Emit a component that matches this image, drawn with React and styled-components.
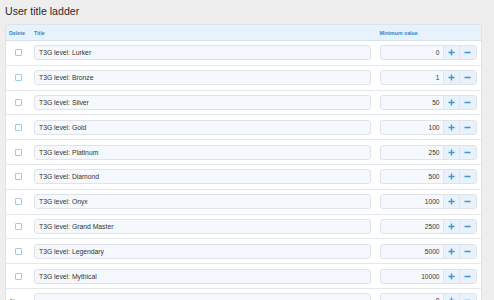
import React from "react";
import styled, { createGlobalStyle } from "styled-components";

const GlobalStyle = createGlobalStyle`
  html, body {
    margin: 0;
    padding: 0;
    background: #eeeeee;
    font-family: "Liberation Sans", Arial, sans-serif;
    overflow: hidden;
  }
`;

const Page = styled.div`
  padding: 5px 12px 0 5px;
  height: 300px;
  box-sizing: border-box;
`;

const Heading = styled.h1`
  margin: 0 0 7px 0;
  font-size: 10.6px;
  font-weight: normal;
  color: #2a2a2a;
  line-height: 12px;
`;

const Panel = styled.div`
  background: #fff;
  border: 1px solid #dfe3e8;
  border-radius: 2px 2px 0 0;
`;

// 공통 행 레이아웃
const Row = styled.div`
  display: grid;
  grid-template-columns: 24px 1fr 105.5px;
  align-items: center;
  height: ${p => (p.$header ? "16px" : "24.8px")};
  box-sizing: border-box;
  background: ${p => (p.$header ? "#e8f2fc" : "#fff")};
  border-bottom: 1px solid ${p => (p.$header ? "#d6e2ee" : "#e6e9ec")};
`;

const HeadCell = styled.div`
  font-size: 5.3px;
  font-weight: bold;
  color: #3a86c4;
  padding-left: ${p => p.$left || "4px"};
`;

const Cell = styled.div`
  display: flex;
  align-items: center;
  padding: 0 4.5px 0 ${p => p.$left || "4px"};
`;

const Check = styled.span`
  display: block;
  width: 5px;
  height: 5px;
  border: 1px solid #a3cbe4;
  border-radius: 1px;
  background: #fff;
  margin-left: 9px;
`;

const TextInput = styled.div`
  flex: 1;
  height: 15px;
  box-sizing: border-box;
  border: 1px solid #dde3e9;
  border-radius: 3px;
  background: #f5f9fd;
  font-size: 6.8px;
  color: #333;
  line-height: 13px;
  padding-left: 4px;
`;

const NumberGroup = styled.div`
  flex: 1;
  display: flex;
  height: 15px;
  box-sizing: border-box;
  border: 1px solid #dde3e9;
  border-radius: 3px;
  overflow: hidden;
  background: #f5f9fd;
`;

const NumberValue = styled.div`
  flex: 1;
  text-align: right;
  font-size: 6.6px;
  color: #333;
  line-height: 13px;
  padding-right: 3px;
`;

const StepButton = styled.div`
  width: 15.5px;
  display: flex;
  align-items: center;
  justify-content: center;
  background: #e9f2fb;
  border-left: 1px solid #dbe6f0;
  color: #3e94d4;
`;

const NewLabel = styled.div`
  font-size: 6px;
  color: #333;
  padding-left: 4px;
`;

const levels = [
  ["Lurker", 0],
  ["Bronze", 1],
  ["Silver", 50],
  ["Gold", 100],
  ["Platinum", 250],
  ["Diamond", 500],
  ["Onyx", 1000],
  ["Grand Master", 2500],
  ["Legendary", 5000],
  ["Mythical", 10000],
];

const PlusIcon = () => (
  <svg width="7" height="7" viewBox="0 0 7 7">
    <path d="M3.5 0.5v6M0.5 3.5h6" stroke="currentColor" strokeWidth="1.4" />
  </svg>
);

const MinusIcon = () => (
  <svg width="7" height="7" viewBox="0 0 7 7">
    <path d="M0.5 3.5h6" stroke="currentColor" strokeWidth="1.4" />
  </svg>
);

const ValueInput = ({ value }) => (
  <NumberGroup>
    <NumberValue>{value}</NumberValue>
    <StepButton><PlusIcon /></StepButton>
    <StepButton><MinusIcon /></StepButton>
  </NumberGroup>
);

const App = () => {
  return (
    <>
      <GlobalStyle />
      <Page>
        <Heading>User title ladder</Heading>
        <Panel>
          <Row $header>
            <HeadCell $left="3px">Delete</HeadCell>
            <HeadCell>Title</HeadCell>
            <HeadCell>Minimum value</HeadCell>
          </Row>
          {levels.map(([name, min]) => (
            <Row key={name}>
              <Cell $left="0">
                <Check />
              </Cell>
              <Cell>
                <TextInput>T3G level: {name}</TextInput>
              </Cell>
              <Cell>
                <ValueInput value={min} />
              </Cell>
            </Row>
          ))}
          <Row>
            <NewLabel>New:</NewLabel>
            <Cell>
              <TextInput />
            </Cell>
            <Cell>
              <ValueInput value={0} />
            </Cell>
          </Row>
        </Panel>
      </Page>
    </>
  );
};

export default App;
